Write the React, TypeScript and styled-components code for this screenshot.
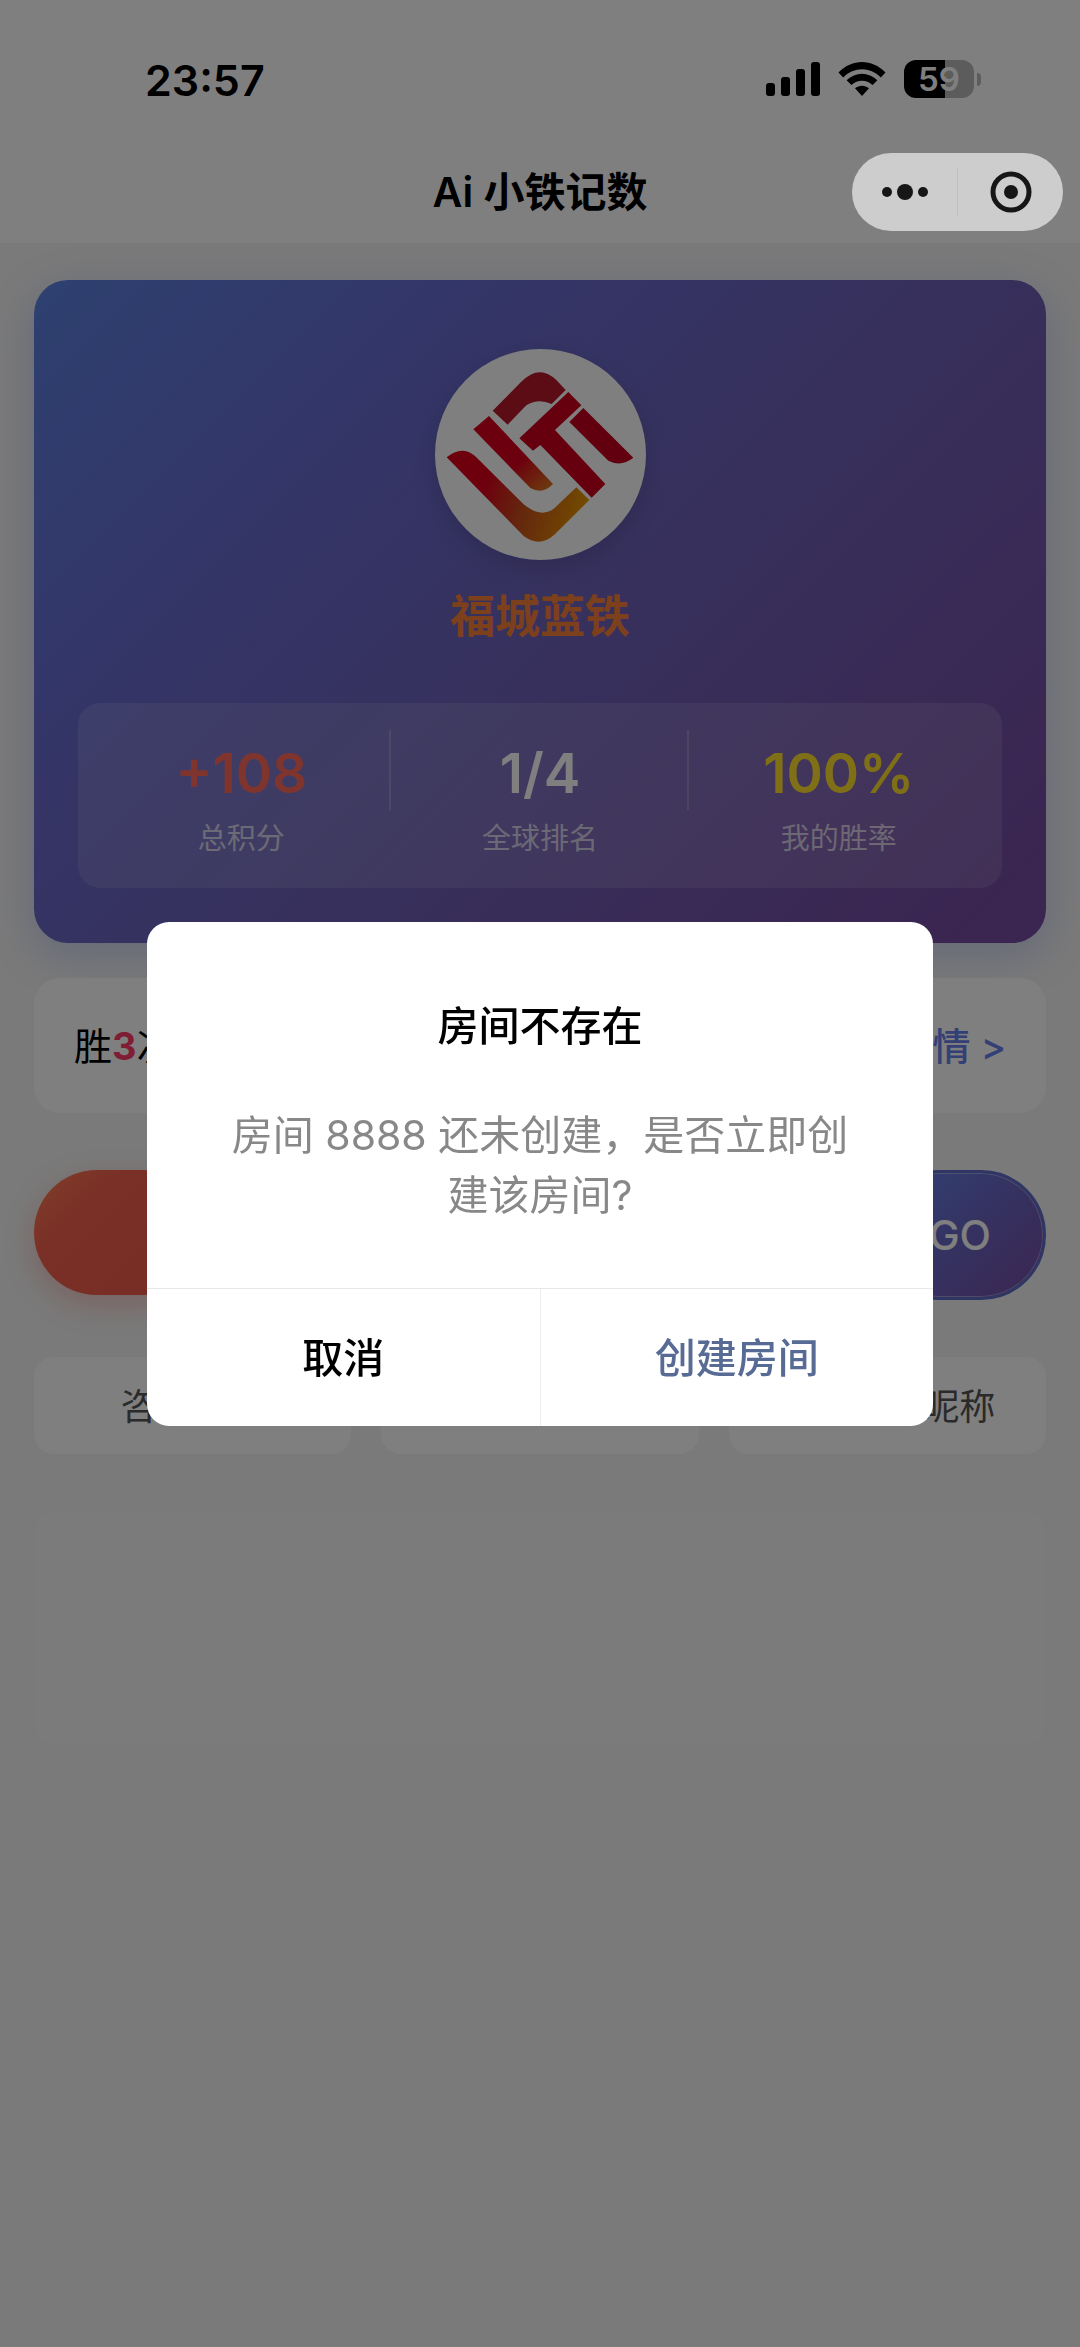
import React from 'react'
import styled, { createGlobalStyle, css } from 'styled-components';

const GlobalStyle = createGlobalStyle`
  * {
    box-sizing: border-box;
    margin: 0;
  }
  body {
    background: #f4f4f4;
    color: #000;
    font-family: Inter, "Noto Sans CJK SC", sans-serif;
    font-size: 40px;
  }
  button, input {
    font: inherit;
    color: inherit;
    border: none;
    background: none;
    padding: 0;
  }
`

type Stat = {
  value: string;
  label: string;
  color: string;
}

const stats: Stat[] = [
  { value: '+108', label: '总积分', color: '#ff6b5b' },
  { value: '1/4', label: '全球排名', color: '#ffffff' },
  { value: '100%', label: '我的胜率', color: '#ffe030' },
]

const SignalIcon = () => (
  <svg width="54" height="36" viewBox="0 0 54 36" aria-hidden="true">
    <rect x="0" y="22" width="9" height="13" rx="3" />
    <rect x="15" y="16" width="9" height="19" rx="3" />
    <rect x="30" y="8" width="9" height="27" rx="3" />
    <rect x="45" y="1" width="9" height="34" rx="3" />
  </svg>
)

const WifiIcon = () => (
  <svg width="48" height="36" viewBox="0 0 48 36" aria-hidden="true">
    <path d="M0.5 11.5C14 -2.5 34 -2.5 47.5 11.5L42.8 16.4C32 5.6 16 5.6 5.2 16.4Z" />
    <path d="M8.6 19.2C17.5 10.5 30.5 10.5 39.4 19.2L34.6 24C28.5 18.3 19.5 18.3 13.4 24Z" />
    <path d="M17 27.2C21 23.8 27 23.8 31 27.2L24 35Z" />
  </svg>
)

const Logo = () => (
  <svg viewBox="102 57 633 633" role="img" aria-label="福城蓝铁">
    <defs>
      <linearGradient id="hook" gradientUnits="userSpaceOnUse" x1="140" y1="380" x2="560" y2="510">
        <stop offset="0.3" stopColor="#dc001c" />
        <stop offset="0.6" stopColor="#c8501c" />
        <stop offset="1" stopColor="#e69600" />
      </linearGradient>
      <linearGradient id="bar" gradientUnits="userSpaceOnUse" x1="240" y1="270" x2="430" y2="480">
        <stop offset="0.6" stopColor="#d8001c" />
        <stop offset="1" stopColor="#d8701c" />
      </linearGradient>
    </defs>
    <path fill="#b8182a" d="M275 242L360 156Q415 100 466 150L494 180L452 222Q412 204 376 226L320 284Z" />
    <path fill="url(#bar)" d="M264 258L456 462Q425 495 388 474L217 298Z" />
    <path fill="url(#hook)" d="M137 382Q182 345 222 378L368 523Q420 566 460 535L526 472L565 510L460 614Q415 654 368 618Z" />
    <path fill="#cc001e" d="M355 325L502 186L541 226L462 300L613 462L572 503L418 345L396 362Z" />
    <path fill="#c4001e" d="M547 234L697 383Q660 412 622 392L505 276Z" />
  </svg>
)

const App = () => {
  return (
    <>
      <GlobalStyle />
      <Header>
        <StatusBar>
          <Time>23:57</Time>
          <StatusIcons>
            <SignalIcon />
            <WifiIcon />
            <Battery>
              <BatteryBody>59</BatteryBody>
              <BatteryTip />
            </Battery>
          </StatusIcons>
        </StatusBar>
        <NavBar>
          <Title>Ai 小铁记数</Title>
          <Capsule>
            <CapsuleButton aria-label="更多">
              <svg width="48" height="18" viewBox="0 0 48 18" fill="#161616">
                <circle cx="6" cy="9" r="5" />
                <circle cx="24" cy="9" r="8" />
                <circle cx="42" cy="9" r="5" />
              </svg>
            </CapsuleButton>
            <CapsuleLine />
            <CapsuleButton aria-label="关闭">
              <svg width="42" height="42" viewBox="0 0 42 42" fill="#161616">
                <circle cx="21" cy="21" r="18" fill="none" stroke="#161616" strokeWidth="5" />
                <circle cx="21" cy="21" r="7" />
              </svg>
            </CapsuleButton>
          </Capsule>
        </NavBar>
      </Header>

      <Main>
        <ProfileCard>
          <Avatar><Logo /></Avatar>
          <Name>福城蓝铁</Name>
          <Stats>
            {stats.map((s) => (
              <StatItem key={s.label}>
                <StatValue color={s.color}>{s.value}</StatValue>
                <StatLabel>{s.label}</StatLabel>
              </StatItem>
            ))}
          </Stats>
        </ProfileCard>

        <RecordCard>
          <p>胜<Count>3</Count>次</p>
          <DetailLink href="#detail">详情 &gt;</DetailLink>
        </RecordCard>

        <Actions>
          <StartButton aria-label="开始" />
          <JoinForm>
            <RoomInput aria-label="房间号" defaultValue="8888" />
            <GoButton type="button">GO</GoButton>
          </JoinForm>
        </Actions>

        <Links>
          <LinkButton>咨询客服</LinkButton>
          <LinkButton aria-label="分享" />
          <LinkButton>修改头像昵称</LinkButton>
        </Links>

        <EmptyPanel />
      </Main>

      <Mask>
        <Dialog role="dialog" aria-modal="true" aria-labelledby="dialog-title">
          <DialogTitle id="dialog-title">房间不存在</DialogTitle>
          <DialogText>房间 8888 还未创建，是否立即创建该房间?</DialogText>
          <DialogFooter>
            <DialogButton>取消</DialogButton>
            <DialogButton primary>创建房间</DialogButton>
          </DialogFooter>
        </Dialog>
      </Mask>
    </>
  )
}

export default App

///-------------------------------- Header --------------------------------///

const Header = styled.header`
  background: #ffffff;
`

const StatusBar = styled.div`
  height: 144px;
  padding: 14px 99px 0 145px;
  display: flex;
  align-items: flex-start;
  justify-content: space-between;
`

const Time = styled.span`
  padding-top: 38px;
  font-size: 43px;
  line-height: 56px;
  font-weight: 600;
`

const StatusIcons = styled.div`
  padding-top: 46px;
  display: flex;
  align-items: center;
  gap: 18px;
`

const Battery = styled.div`
  display: flex;
  align-items: center;
  gap: 3px;
`

const BatteryBody = styled.div`
  width: 70px;
  height: 38px;
  border-radius: 12px;
  background: linear-gradient(to right, #000 59%, #b8b8b8 59%);
  color: #ffffff;
  font-size: 33px;
  line-height: 38px;
  font-weight: 600;
  text-align: center;
`

const BatteryTip = styled.div`
  width: 4px;
  height: 13px;
  border-radius: 0 6px 6px 0;
  background: #b8b8b8;
`

const NavBar = styled.div`
  height: 99px;
  padding: 0 17px 4px;
  display: grid;
  grid-template-columns: 1fr auto 1fr;
  align-items: center;
`

const Title = styled.h1`
  grid-column: 2;
  font-size: 41px;
  line-height: 60px;
  font-weight: 600;
`

// stays above the dialog mask
const Capsule = styled.div`
  position: relative;
  z-index: 20;
  justify-self: end;
  width: 211px;
  height: 78px;
  border-radius: 39px;
  background: #cdcdcd;
  display: flex;
  align-items: center;
`

const CapsuleButton = styled.button`
  flex: 1;
  height: 78px;
  display: flex;
  align-items: center;
  justify-content: center;
`

const CapsuleLine = styled.div`
  width: 1px;
  height: 50px;
  background: #c0c0c0;
`

///-------------------------------- Page --------------------------------///

const Main = styled.main`
  padding: 37px 34px;
`

const ProfileCard = styled.section`
  padding: 69px 44px 55px;
  border-radius: 34px;
  background: linear-gradient(135deg, #5b82e0 0%, #676cd2 25%, #6e62ba 52%, #764ba2 95%);
  box-shadow: 0 12px 44px rgba(102, 126, 234, 0.3);
  display: flex;
  flex-direction: column;
  align-items: center;
`

const Avatar = styled.div`
  width: 211px;
  height: 211px;
  border-radius: 50%;
  background: #ffffff;
  box-shadow: 0 8px 24px rgba(0, 0, 0, 0.15);
  svg {
    display: block;
  }
`

const Name = styled.h2`
  margin: 24px 0 53px;
  font-size: 45px;
  line-height: 66px;
  font-weight: 600;
  color: #f88038;
`

const Stats = styled.div`
  width: 100%;
  padding: 27px 14px;
  border-radius: 22px;
  background: rgba(255, 255, 255, 0.12);
  display: grid;
  grid-template-columns: repeat(3, 1fr);
`

const StatItem = styled.div`
  height: 131px;
  text-align: center;
  background: linear-gradient(rgba(255, 255, 255, 0.2), rgba(255, 255, 255, 0.2)) right top / 2px 80px no-repeat;
  &:last-child {
    background: none;
  }
`

const StatValue = styled.p`
  font-size: 55px;
  line-height: 86px;
  font-weight: 600;
  color: ${(props) => props.color};
`

const StatLabel = styled.p`
  font-size: 29px;
  line-height: 46px;
  color: rgba(255, 255, 255, 0.7);
`

const RecordCard = styled.section`
  margin-top: 35px;
  height: 135px;
  padding: 0 40px 4px;
  border-radius: 26px;
  background: #ffffff;
  font-size: 38px;
  display: flex;
  align-items: center;
  justify-content: space-between;
`

const Count = styled.b`
  color: #ff3b6b;
`

const DetailLink = styled.a`
  color: #667eea;
  font-weight: 500;
  text-decoration: none;
`

const Actions = styled.div`
  margin-top: 57px;
  display: grid;
  grid-template-columns: 1fr 1fr;
  align-items: start;
  gap: 30px;
`

const StartButton = styled.button`
  height: 125px;
  border-radius: 63px;
  background: linear-gradient(135deg, #ff7e55, #f4604c 30%, #ee5a4a);
  box-shadow: 0 10px 30px rgba(238, 90, 74, 0.3);
`

const JoinForm = styled.form`
  height: 130px;
  display: flex;
  align-items: center;
  gap: 12px;
`

const RoomInput = styled.input`
  flex: 1;
  min-width: 0;
`

const GoButton = styled.button`
  width: 172px;
  height: 130px;
  border: 3px solid #5f6cc8;
  border-radius: 65px;
  background: linear-gradient(135deg, #5f86ea, #6a66c4 50%, #764ba2);
  box-shadow: inset 0 0 0 1px rgba(255, 255, 255, 0.35);
  color: #ffffff;
  font-size: 41px;
  font-weight: 500;
`

const Links = styled.nav`
  margin-top: 57px;
  display: grid;
  grid-template-columns: repeat(3, 1fr);
  gap: 30px;
`

const LinkButton = styled.button`
  height: 97px;
  padding-bottom: 4px;
  border-radius: 20px;
  background: #ffffff;
  color: #555555;
  font-size: 36px;
`

const EmptyPanel = styled.section`
  margin-top: 57px;
  height: 234px;
  border-radius: 26px;
  background: #f7f7f7;
`

///-------------------------------- Dialog --------------------------------///

const Mask = styled.div`
  position: fixed;
  inset: 0;
  z-index: 10;
  background: rgba(0, 0, 0, 0.5);
  display: flex;
  align-items: center;
  justify-content: center;
`

const Dialog = styled.div`
  width: 786px;
  max-width: 90%;
  border-radius: 22px;
  background: #ffffff;
  overflow: hidden;
  text-align: center;
`

const DialogTitle = styled.h2`
  padding-top: 74px;
  font-size: 41px;
  line-height: 60px;
  font-weight: 500;
`

const DialogText = styled.p`
  padding: 49px 72px 63px;
  font-size: 41px;
  line-height: 60px;
  color: #888888;
`

const DialogFooter = styled.div`
  display: flex;
  border-top: 1px solid #e8e8e8;
`

type DialogButtonProps = {
  primary?: boolean;
}
const DialogButton = styled.button<DialogButtonProps>(
  (props) => css`
  flex: 1;
  height: 137px;
  padding-bottom: 4px;
  font-size: 41px;
  font-weight: 500;
  color: ${props.primary ? '#576b95' : '#000000'};
  & + & {
    border-left: 1px solid #ededed;
  }
  `
)
